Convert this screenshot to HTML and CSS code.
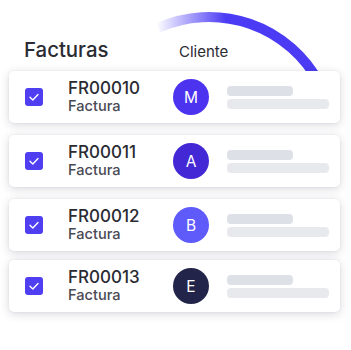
FILE: index.html
```html
<!DOCTYPE html>
<html lang="es">
<head>
<meta charset="utf-8">
<link rel="stylesheet" href="styles.css">
</head>
<body>
<div class="stage">
  <svg class="arc" width="351" height="350" viewBox="0 0 351 350" aria-hidden="true">
    <defs>
      <linearGradient id="arcFade" gradientUnits="userSpaceOnUse" x1="156" y1="0" x2="226" y2="0">
        <stop offset="0" stop-color="#4b3bf4" stop-opacity="0"/>
        <stop offset="1" stop-color="#4b3bf4" stop-opacity="1"/>
      </linearGradient>
    </defs>
    <path d="M158.2 27.8 A125 125 0 0 1 319.4 83.3" fill="none" stroke="url(#arcFade)" stroke-width="10"/>
  </svg>

  <div class="header">
    <div class="title">Facturas</div>
    <div class="col">Cliente</div>
  </div>

  <div class="list">
    <div class="card">
      <span class="check"><svg width="18" height="18" viewBox="0 0 18 18"><path d="M5 9.3 L7.8 12 L13 6.6" fill="none" stroke="#fff" stroke-width="1.4" stroke-linecap="round" stroke-linejoin="round"/></svg></span>
      <div class="doc"><div class="id">FR00010</div><div class="type">Factura</div></div>
      <div class="avatar av-m">M</div>
      <div class="bars"><span class="bar bar-a"></span><span class="bar bar-b"></span></div>
    </div>
    <div class="card">
      <span class="check"><svg width="18" height="18" viewBox="0 0 18 18"><path d="M5 9.3 L7.8 12 L13 6.6" fill="none" stroke="#fff" stroke-width="1.4" stroke-linecap="round" stroke-linejoin="round"/></svg></span>
      <div class="doc"><div class="id">FR00011</div><div class="type">Factura</div></div>
      <div class="avatar av-a">A</div>
      <div class="bars"><span class="bar bar-a"></span><span class="bar bar-b"></span></div>
    </div>
    <div class="card">
      <span class="check"><svg width="18" height="18" viewBox="0 0 18 18"><path d="M5 9.3 L7.8 12 L13 6.6" fill="none" stroke="#fff" stroke-width="1.4" stroke-linecap="round" stroke-linejoin="round"/></svg></span>
      <div class="doc"><div class="id">FR00012</div><div class="type">Factura</div></div>
      <div class="avatar av-b">B</div>
      <div class="bars"><span class="bar bar-a"></span><span class="bar bar-b"></span></div>
    </div>
    <div class="card card-last">
      <span class="check"><svg width="18" height="18" viewBox="0 0 18 18"><path d="M5 9.3 L7.8 12 L13 6.6" fill="none" stroke="#fff" stroke-width="1.4" stroke-linecap="round" stroke-linejoin="round"/></svg></span>
      <div class="doc"><div class="id">FR00013</div><div class="type">Factura</div></div>
      <div class="avatar av-e">E</div>
      <div class="bars"><span class="bar bar-a"></span><span class="bar bar-b"></span></div>
    </div>
  </div>
</div>
</body>
</html>
```

FILE: styles.css
```css
html, body {
  margin: 0;
  padding: 0;
  background: #ffffff;
}

body {
  font-family: Inter, "Noto Sans", "Liberation Sans", sans-serif;
  color: #2b2b33;
}

.stage {
  position: relative;
  z-index: 0;
  width: 351px;
  height: 350px;
  overflow: hidden;
}

.arc {
  position: absolute;
  left: 0;
  top: 0;
  z-index: -1;
}

.header {
  display: flex;
  align-items: baseline;
  height: 24px;
  padding-top: 38px;
  padding-left: 24px;
  margin-bottom: 9px;
}

.title {
  font-size: 20.4px;
  line-height: 24px;
  font-weight: 500;
  color: #2b2b33;
  width: 155px;
}

.col {
  font-size: 15px;
  line-height: 24px;
  font-weight: 400;
  color: #2b2b33;
}

.list {
  display: flex;
  flex-direction: column;
  gap: 12px;
  padding-left: 9px;
  width: 331px;
}

.card {
  display: flex;
  align-items: center;
  height: 52px;
  box-sizing: border-box;
  padding-left: 16px;
  background: #ffffff;
  border-radius: 5px;
  box-shadow: 0 2px 10px rgba(40, 40, 70, 0.18), 0 0 2px rgba(40, 40, 70, 0.08);
}

.card-last {
  margin-top: -3px;
}

.check {
  display: block;
  width: 18px;
  height: 18px;
  border-radius: 3px;
  background: #4f3ef2;
}

.check svg {
  display: block;
}

.doc {
  width: 105px;
  margin-left: 25px;
  padding-bottom: 2px;
}

.id {
  font-size: 17px;
  line-height: 20px;
  font-weight: 500;
  color: #2b2b33;
}

.type {
  font-size: 14.6px;
  line-height: 17px;
  font-weight: 500;
  color: #4a4a55;
}

.avatar {
  width: 36px;
  height: 36px;
  border-radius: 50%;
  display: flex;
  align-items: center;
  justify-content: center;
  color: #ffffff;
  font-size: 15.5px;
  font-weight: 400;
}

.av-m { background: #4c33ef; }
.av-a { background: #4328d6; }
.av-b { background: #5f5bfb; }
.av-e { background: #23244a; }

.bars {
  display: flex;
  flex-direction: column;
  gap: 3px;
  margin-left: 18px;
}

.bar {
  display: block;
  height: 10px;
  border-radius: 4px;
}

.bar-a {
  width: 66px;
  background: #dde0e6;
}

.bar-b {
  width: 102px;
  background: #e8e9ed;
}
```
